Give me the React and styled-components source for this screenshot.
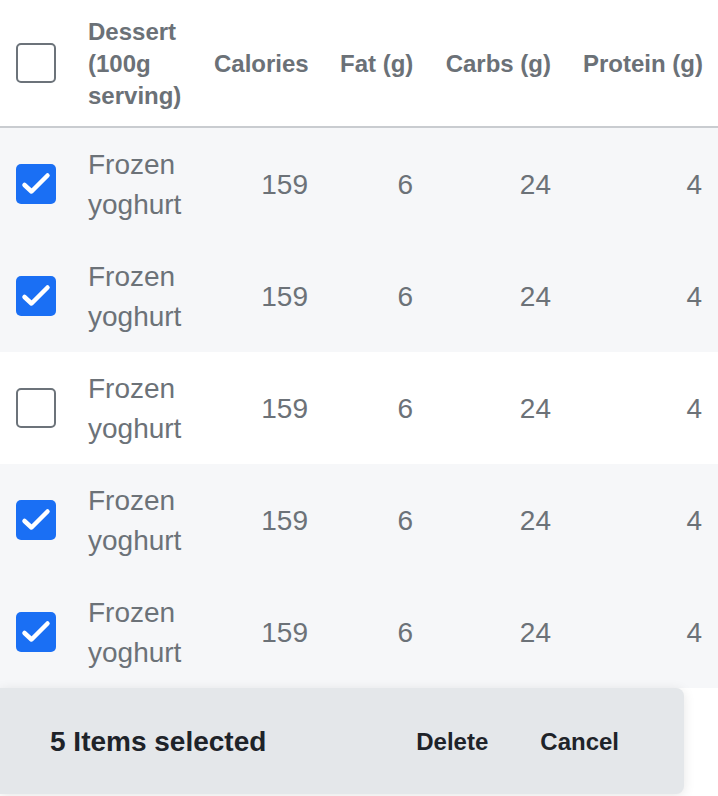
import React, { useState } from "react";
import styled, { createGlobalStyle } from "styled-components";

const GlobalStyle = createGlobalStyle`
  html, body {
    margin: 0;
    padding: 0;
    background: #ffffff;
    font-family: "Liberation Sans", Arial, sans-serif;
    overflow: hidden;
  }
`;

const Page = styled.div`
  width: 718px;
  height: 796px;
  display: flex;
  flex-direction: column;
`;

const Table = styled.table`
  width: 718px;
  border-collapse: collapse;
  table-layout: fixed;
`;

const HeadCell = styled.th`
  padding: 16px 16px 14px;
  font-size: 24px;
  line-height: 32px;
  font-weight: 700;
  color: #6b7177;
  text-align: ${(p) => (p.$align === "right" ? "right" : "left")};
  white-space: ${(p) => (p.$wrap ? "normal" : "nowrap")};
  vertical-align: middle;
  border-bottom: 2px solid #c9ccd0;
`;

const Row = styled.tr`
  background: ${(p) => (p.$selected ? "#f6f7f9" : "#ffffff")};
`;

const Cell = styled.td`
  padding: 17px 16px 15px;
  font-size: 28px;
  line-height: 40px;
  color: #6c7278;
  text-align: ${(p) => (p.$align === "right" ? "right" : "left")};
  vertical-align: middle;
`;

const BoxCell = styled.td`
  padding: 0 16px;
  vertical-align: middle;
  line-height: 0;
`;

const HeadBoxCell = styled.th`
  padding: 0 16px;
  vertical-align: middle;
  line-height: 0;
  border-bottom: 2px solid #c9ccd0;
`;

const Box = styled.button`
  width: 40px;
  height: 40px;
  padding: 0;
  margin: 0;
  border-radius: 5px;
  border: ${(p) => (p.$checked ? "none" : "2px solid #6c737a")};
  background: ${(p) => (p.$checked ? "#1a6ff4" : "#ffffff")};
  display: flex;
  align-items: center;
  justify-content: center;
  cursor: pointer;
`;

const Bar = styled.div`
  height: 104px;
  padding: 2px 39px 0 50px;
  box-sizing: content-box;
  width: 595px;
  display: flex;
  align-items: center;
  background: #e4e7ea;
  border-radius: 0 8px 8px 0;
  box-shadow: 0 2px 12px rgba(0, 0, 0, 0.1);
`;

const BarTitle = styled.div`
  flex: 1;
  font-size: 28px;
  font-weight: 700;
  color: #1e2329;
`;

const BarButton = styled.button`
  background: none;
  border: none;
  padding: 10px 26px;
  font-family: "Liberation Sans", Arial, sans-serif;
  font-size: 24px;
  font-weight: 700;
  color: #1e2329;
  cursor: pointer;
`;

const Check = () => (
  <svg width="40" height="40" viewBox="0 0 40 40">
    <polyline
      points="8.5,21 15.5,27.5 31.5,11.5"
      fill="none"
      stroke="#ffffff"
      strokeWidth="4.5"
      strokeLinecap="round"
      strokeLinejoin="round"
    />
  </svg>
);

const Checkbox = ({ checked, onClick }) => (
  <Box $checked={checked} onClick={onClick}>
    {checked && <Check />}
  </Box>
);

const initialRows = [true, true, false, true, true].map((sel, i) => ({
  id: i,
  name: "Frozen yoghurt",
  calories: 159,
  fat: 6,
  carbs: 24,
  protein: 4,
  selected: sel,
}));

export default function App() {
  const [rows, setRows] = useState(initialRows);

  const toggle = (id) =>
    setRows((rs) =>
      rs.map((r) => (r.id === id ? { ...r, selected: !r.selected } : r))
    );

  return (
    <Page>
      <GlobalStyle />
      <Table>
        <colgroup>
          <col style={{ width: 72 }} />
          <col style={{ width: 126 }} />
          <col style={{ width: 126 }} />
          <col style={{ width: 105 }} />
          <col style={{ width: 138 }} />
          <col style={{ width: 151 }} />
        </colgroup>
        <thead>
          <tr>
            <HeadBoxCell>
              <Checkbox checked={false} />
            </HeadBoxCell>
            <HeadCell $wrap>Dessert (100g serving)</HeadCell>
            <HeadCell $align="right">Calories</HeadCell>
            <HeadCell $align="right">Fat (g)</HeadCell>
            <HeadCell $align="right">Carbs (g)</HeadCell>
            <HeadCell $align="right">Protein (g)</HeadCell>
          </tr>
        </thead>
        <tbody>
          {rows.map((r) => (
            <Row key={r.id} $selected={r.selected}>
              <BoxCell>
                <Checkbox checked={r.selected} onClick={() => toggle(r.id)} />
              </BoxCell>
              <Cell>{r.name}</Cell>
              <Cell $align="right">{r.calories}</Cell>
              <Cell $align="right">{r.fat}</Cell>
              <Cell $align="right">{r.carbs}</Cell>
              <Cell $align="right">{r.protein}</Cell>
            </Row>
          ))}
        </tbody>
      </Table>
      <Bar>
        <BarTitle>5 Items selected</BarTitle>
        <BarButton>Delete</BarButton>
        <BarButton>Cancel</BarButton>
      </Bar>
    </Page>
  );
}
